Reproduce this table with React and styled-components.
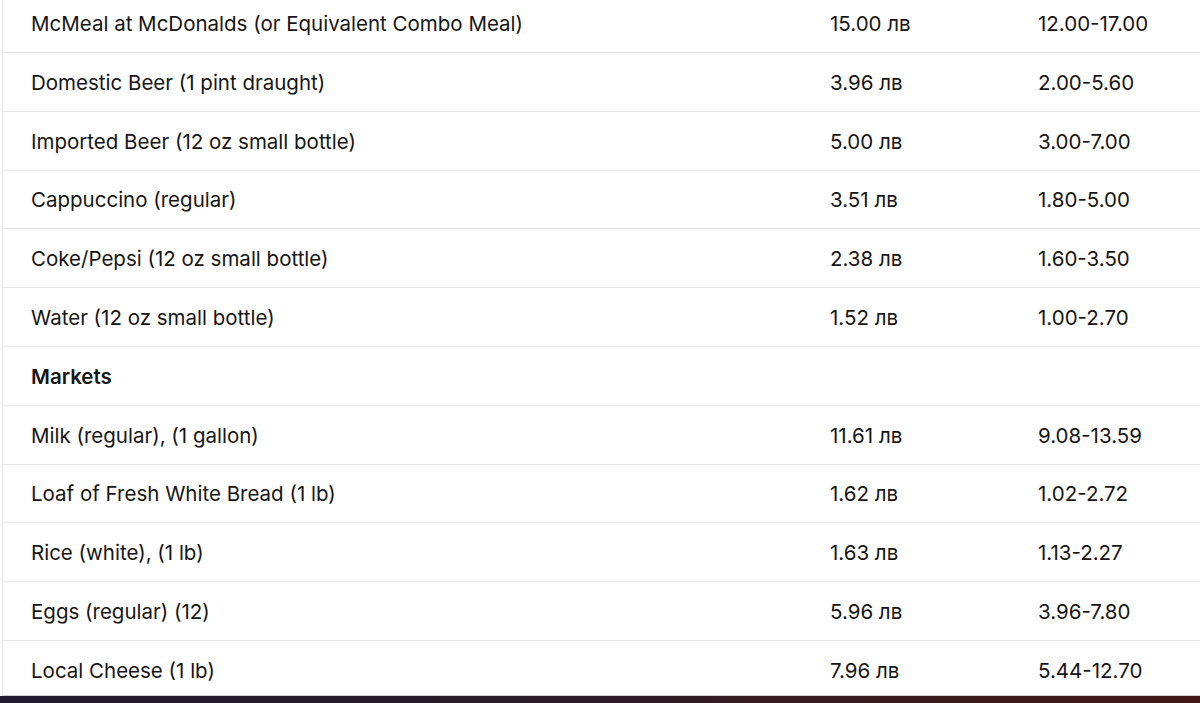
import React from "react";
import styled, { createGlobalStyle } from "styled-components";

const Global = createGlobalStyle`
  html, body { margin: 0; padding: 0; background: #ffffff; }
  body { font-family: Inter, "Noto Sans", "Liberation Sans", sans-serif; color: #151515; }
`;

const Page = styled.div`
  height: 703px;
  display: flex;
  flex-direction: column;
  overflow: hidden;
  background: #fff;
`;

const Viewport = styled.div`
  flex: 1;
  overflow: hidden;
  margin-left: 2px;
  border-left: 1px solid #ececec;
  border-bottom: 1px solid #cfcfd4;
`;

const Table = styled.div`
  margin-top: -5.8px;
  display: flex;
  flex-direction: column;
`;

const Row = styled.div`
  box-sizing: border-box;
  height: 58.8px;
  display: grid;
  grid-template-columns: 799px 208px 1fr;
  align-items: center;
  padding: 2px 0 0 28px;
  border-bottom: 1px solid #e6e6e6;
  font-size: 20.5px;
  line-height: 28px;
  font-weight: ${(p) => (p.$head ? 600 : 400)};
  white-space: nowrap;
`;

const Cell = styled.div``;

const Footer = styled.div`
  height: 7px;
  flex: none;
  background: linear-gradient(90deg, #1f1a2e 0%, #2b1c28 45%, #3a1b1d 75%, #421818 100%);
`;

const rows = [
  ["McMeal at McDonalds (or Equivalent Combo Meal)", "15.00 лв", "12.00-17.00"],
  ["Domestic Beer (1 pint draught)", "3.96 лв", "2.00-5.60"],
  ["Imported Beer (12 oz small bottle)", "5.00 лв", "3.00-7.00"],
  ["Cappuccino (regular)", "3.51 лв", "1.80-5.00"],
  ["Coke/Pepsi (12 oz small bottle)", "2.38 лв", "1.60-3.50"],
  ["Water (12 oz small bottle)", "1.52 лв", "1.00-2.70"],
  ["Markets", null, null],
  ["Milk (regular), (1 gallon)", "11.61 лв", "9.08-13.59"],
  ["Loaf of Fresh White Bread (1 lb)", "1.62 лв", "1.02-2.72"],
  ["Rice (white), (1 lb)", "1.63 лв", "1.13-2.27"],
  ["Eggs (regular) (12)", "5.96 лв", "3.96-7.80"],
  ["Local Cheese (1 lb)", "7.96 лв", "5.44-12.70"],
];

export default function App() {
  return (
    <>
      <Global />
      <Page>
        <Viewport>
          <Table>
            {rows.map(([name, price, range]) => (
              <Row key={name} $head={price === null}>
                <Cell>{name}</Cell>
                <Cell>{price}</Cell>
                <Cell>{range}</Cell>
              </Row>
            ))}
          </Table>
        </Viewport>
        <Footer />
      </Page>
    </>
  );
}
